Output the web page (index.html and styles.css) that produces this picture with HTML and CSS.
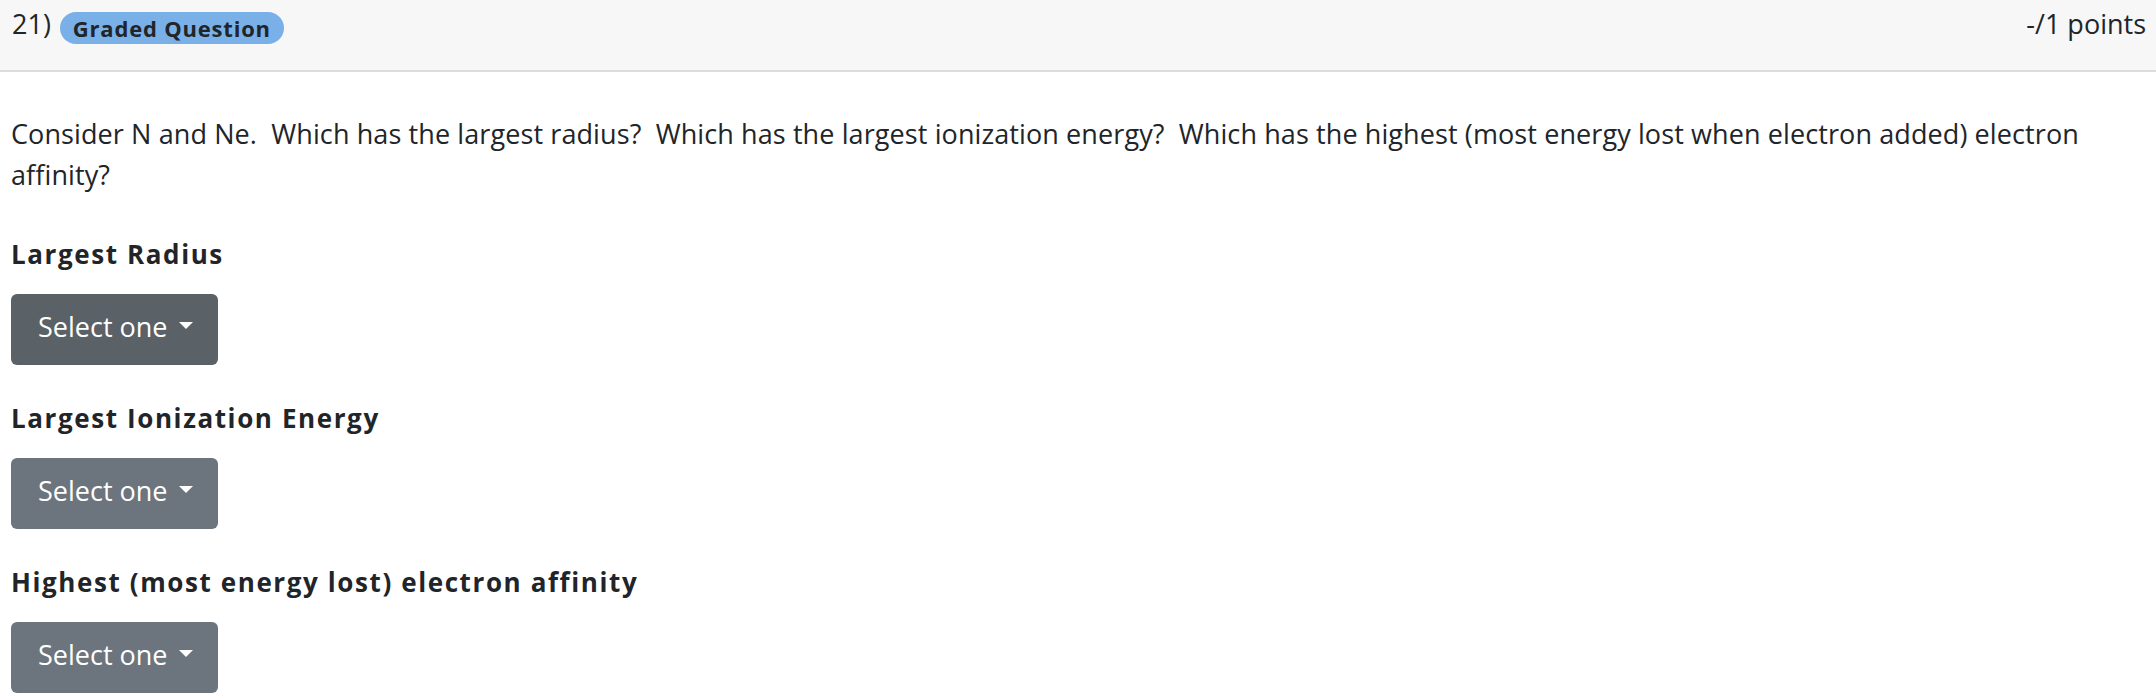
FILE: index.html
```html
<!DOCTYPE html>
<html lang="en">
<head>
  <meta charset="UTF-8">
  <title>Question 21</title>
  <link rel="stylesheet" href="styles.css">
</head>
<body>

  <header class="q-header">
    <div class="q-title">
      <span class="q-num">21)</span>
      <span class="badge">Graded Question</span>
    </div>
    <span class="q-points">-/1 points</span>
  </header>

  <main class="q-body">
    <p class="prompt">Consider N and Ne.&nbsp; Which has the largest radius?&nbsp; Which has the largest ionization energy?&nbsp; Which has the highest (most energy lost when electron added) electron affinity?</p>

    <div class="part">
      <div class="part-label">Largest Radius</div>
      <button class="select-btn active" type="button">Select one<span class="caret"></span></button>
    </div>

    <div class="part">
      <div class="part-label">Largest Ionization Energy</div>
      <button class="select-btn" type="button">Select one<span class="caret"></span></button>
    </div>

    <div class="part">
      <div class="part-label">Highest (most energy lost) electron affinity</div>
      <button class="select-btn" type="button">Select one<span class="caret"></span></button>
    </div>
  </main>

</body>
</html>
```

FILE: styles.css
```css
:root {
  --text: #212529;
  --btn: #6c757d;
  --btn-dark: #5a6268;
  --badge: #7ab0e8;
}

body {
  margin: 0;
  font-family: "Open Sans", Lato, sans-serif;
  color: var(--text);
  background: #fff;
}

.q-header {
  display: flex;
  align-items: flex-start;
  height: 58px;
  padding: 12px 10px 0 12px;
  background: #f7f7f7;
  border-bottom: 2px solid #dcdcdc;
}

.q-title {
  display: flex;
  align-items: flex-start;
  gap: 9px;
}

.q-num,
.q-points {
  font-size: 27px;
  line-height: 24px;
}

.q-points {
  margin-left: auto;
}

.badge {
  display: inline-block;
  height: 32px;
  padding: 0 13px;
  border-radius: 16px;
  background: var(--badge);
  font-size: 22px;
  font-weight: 700;
  letter-spacing: 0.8px;
  line-height: 32px;
}

.q-body {
  padding: 0 11px;
}

.prompt {
  margin: 41px 0 0;
  font-size: 27px;
  letter-spacing: 0.1px;
  line-height: 41px;
}

.part {
  margin-top: 35px;
}

.prompt + .part {
  margin-top: 41px;
}

.part-label {
  font-size: 26px;
  font-weight: 700;
  letter-spacing: 1.6px;
  line-height: 36px;
  margin-bottom: 22px;
}

.select-btn {
  display: inline-block;
  padding: 1px 25px 6px 27px;
  border: none;
  border-radius: 6px;
  background: var(--btn);
  color: #fff;
  font-family: inherit;
  font-size: 27px;
  line-height: 64px;
  cursor: pointer;
}

.select-btn.active {
  background: var(--btn-dark);
}

.caret {
  display: inline-block;
  width: 0;
  height: 0;
  margin-left: 12px;
  vertical-align: 8px;
  border-top: 7px solid #fff;
  border-left: 7px solid transparent;
  border-right: 7px solid transparent;
}
```
